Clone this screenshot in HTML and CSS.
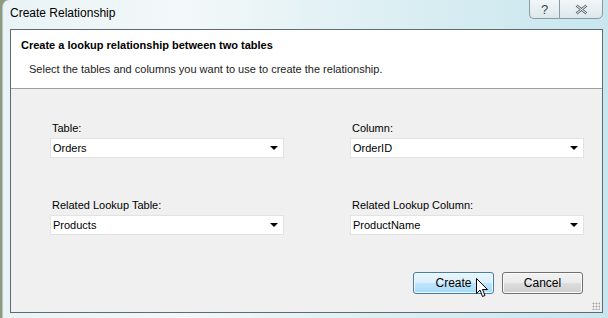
FILE: index.html
```html
<!DOCTYPE html>
<html lang="en">
<head>
    <meta charset="UTF-8">
    <meta name="viewport" content="width=device-width, initial-scale=1.0">
    <title>Create Relationship</title>
    <link rel="stylesheet" href="styles.css">
</head>
<body>
    <div class="window">
        <div class="titlebar">
            <span class="caption">Create Relationship</span>
            <div class="caption-buttons">
                <span class="cap-btn help">?</span>
                <span class="cap-btn close">
                    <svg width="13" height="11" viewBox="0 0 13 11">
                        <path d="M1.5 1.5 L11.5 9.5 M11.5 1.5 L1.5 9.5" stroke="#5a6670" stroke-width="2.6" fill="none"/>
                        <path d="M1.5 1.5 L11.5 9.5 M11.5 1.5 L1.5 9.5" stroke="#fff" stroke-width="1" fill="none"/>
                    </svg>
                </span>
            </div>
        </div>
        <div class="client">
            <div class="header">
                <div class="heading">Create a lookup relationship between two tables</div>
                <div class="subheading">Select the tables and columns you want to use to create the relationship.</div>
            </div>
            <div class="content">
                <div class="fields">
                    <div class="field">
                        <label>Table:</label>
                        <div class="combo"><span>Orders</span><i class="arrow"></i></div>
                    </div>
                    <div class="field">
                        <label>Column:</label>
                        <div class="combo"><span>OrderID</span><i class="arrow"></i></div>
                    </div>
                    <div class="field">
                        <label>Related Lookup Table:</label>
                        <div class="combo"><span>Products</span><i class="arrow"></i></div>
                    </div>
                    <div class="field">
                        <label>Related Lookup Column:</label>
                        <div class="combo"><span>ProductName</span><i class="arrow"></i></div>
                    </div>
                </div>
                <div class="buttons">
                    <button type="button" class="btn primary">Create
                        <svg class="cursor" width="13" height="20" viewBox="0 0 13 20">
                            <path d="M0.5 0.5 L0.5 15.5 L4 12 L6.5 18.5 L9 17.5 L6.5 11.5 L11.5 11.5 Z" fill="#fff" stroke="#000" stroke-width="1"/>
                        </svg>
                    </button>
                    <button type="button" class="btn">Cancel</button>
                </div>
                <div class="grip"></div>
            </div>
        </div>
    </div>
</body>
</html>
```

FILE: styles.css
```css
body {
    margin: 0;
    width: 608px;
    height: 318px;
    overflow: hidden;
    background: #8e9a80;
    font-family: "Liberation Sans", Arial, sans-serif;
    font-size: 11px;
    color: #000;
}
.window {
    margin-left: 2px;
    height: 318px;
    box-sizing: border-box;
    padding: 1px 5px 0 7px;
    border-top-left-radius: 7px;
    border-left: 1px solid #b9c6c9;
    background: linear-gradient(to right, #e9f3f5 0%, #f3f8f9 30%, #d8edf2 70%, #c9e6ee 100%);
}
.titlebar {
    height: 28px;
    display: flex;
    justify-content: space-between;
    align-items: flex-start;
}
.caption {
    margin: 5px 0 0 0;
    font-size: 12px;
    color: #000;
}
.caption-buttons {
    display: flex;
    margin-top: -2px;
}
.cap-btn {
    height: 18px;
    display: flex;
    align-items: center;
    justify-content: center;
    border: 1px solid #8a9aa3;
    background: linear-gradient(#f2f6f8, #dde8ec);
    color: #3c4850;
    font-size: 13px;
}
.help {
    width: 29px;
    border-bottom-left-radius: 5px;
    border-right: none;
}
.close {
    width: 42px;
    border-bottom-right-radius: 5px;
}
.client {
    height: 282px;
    border: 1px solid #5e6b73;
    background: #f0f0f0;
    display: flex;
    flex-direction: column;
}
.header {
    height: 59px;
    background: #fff;
    border-bottom: 1px solid #a0a0a0;
    box-sizing: border-box;
    padding: 9px 0 0 10px;
}
.heading {
    font-weight: bold;
    font-size: 11px;
}
.subheading {
    margin: 12px 0 0 8px;
    color: #222;
}
.content {
    flex: 1;
    position: relative;
    padding: 0 19px 0 39px;
}
.fields {
    display: grid;
    grid-template-columns: 234px 234px;
    column-gap: 66px;
    row-gap: 41px;
    padding-top: 33px;
}
.field label {
    display: block;
    margin: 0 0 4px 2px;
}
.combo {
    height: 20px;
    box-sizing: border-box;
    background: #fff;
    border: 1px solid #e2e2e2;
    display: flex;
    align-items: center;
    justify-content: space-between;
    padding: 0 5px 0 2px;
}
.arrow {
    width: 0;
    height: 0;
    border-left: 4px solid transparent;
    border-right: 4px solid transparent;
    border-top: 4px solid #000;
}
.buttons {
    display: flex;
    justify-content: flex-end;
    gap: 8px;
    margin-top: 37px;
}
.btn {
    position: relative;
    width: 81px;
    height: 22px;
    font-family: inherit;
    font-size: 12px;
    color: #000;
    border: 1px solid #707070;
    border-radius: 3px;
    background: linear-gradient(#f2f2f2 0%, #ebebeb 50%, #dddddd 51%, #cfcfcf 100%);
    box-shadow: inset 0 0 0 1px #fbfbfb;
    padding: 0;
}
.btn.primary {
    border-color: #3c7fb1;
    background: linear-gradient(#eaf6fd 0%, #d9f0fc 50%, #bee6fd 51%, #a7d9f5 100%);
}
.cursor {
    position: absolute;
    left: 62px;
    top: 5px;
}
.grip {
    position: absolute;
    right: 2px;
    bottom: 2px;
    width: 8px;
    height: 8px;
    background-image: radial-gradient(circle, #a9a9a9 0.8px, transparent 1.2px);
    background-size: 3px 3px;
}
```
